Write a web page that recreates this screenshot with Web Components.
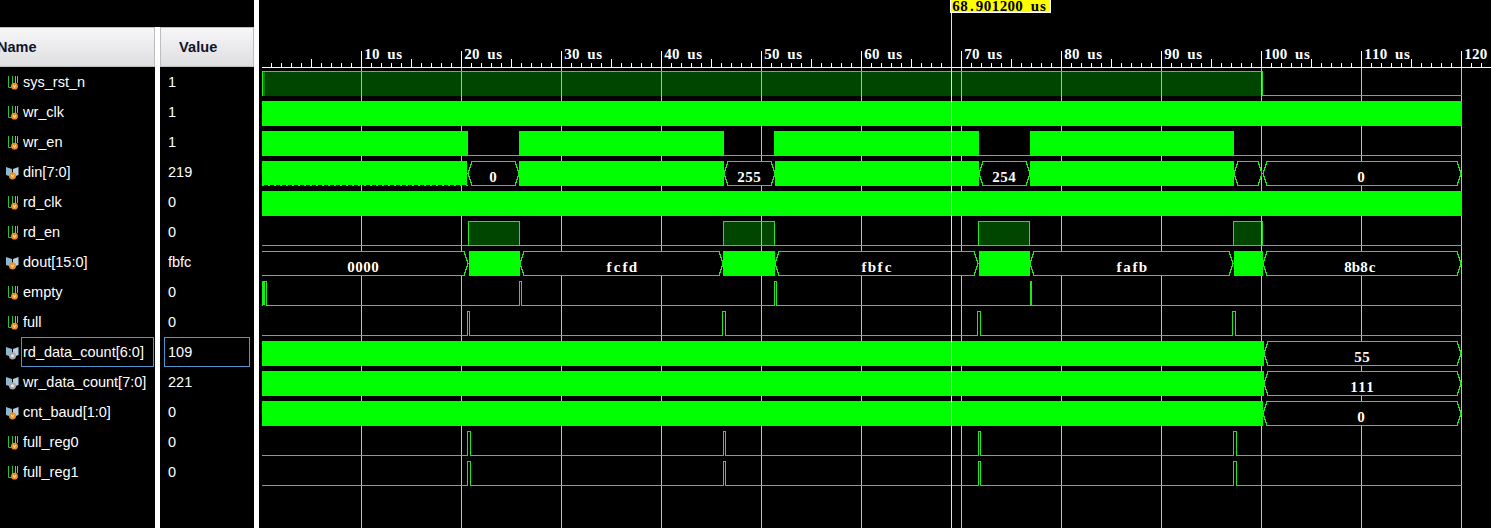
<!DOCTYPE html>
<html>
<head>
<meta charset="utf-8">
<style>
	html, body { margin: 0; height: 528px; overflow: hidden; background: #000; }
</style>
</head>
<body>
<wave-window>
	<signal-row slot="names" kind="bit"><span>sys_rst_n</span></signal-row>
	<signal-row slot="names" kind="bit"><span>wr_clk</span></signal-row>
	<signal-row slot="names" kind="bit"><span>wr_en</span></signal-row>
	<signal-row slot="names" kind="bus"><span>din[7:0]</span></signal-row>
	<signal-row slot="names" kind="bit"><span>rd_clk</span></signal-row>
	<signal-row slot="names" kind="bit"><span>rd_en</span></signal-row>
	<signal-row slot="names" kind="bus"><span>dout[15:0]</span></signal-row>
	<signal-row slot="names" kind="bit"><span>empty</span></signal-row>
	<signal-row slot="names" kind="bit"><span>full</span></signal-row>
	<signal-row slot="names" kind="bus" grey selected><span>rd_data_count[6:0]</span></signal-row>
	<signal-row slot="names" kind="bus" grey><span>wr_data_count[7:0]</span></signal-row>
	<signal-row slot="names" kind="bus"><span>cnt_baud[1:0]</span></signal-row>
	<signal-row slot="names" kind="bit"><span>full_reg0</span></signal-row>
	<signal-row slot="names" kind="bit"><span>full_reg1</span></signal-row>

	<value-row slot="values">1</value-row>
	<value-row slot="values">1</value-row>
	<value-row slot="values">1</value-row>
	<value-row slot="values">219</value-row>
	<value-row slot="values">0</value-row>
	<value-row slot="values">0</value-row>
	<value-row slot="values">fbfc</value-row>
	<value-row slot="values">0</value-row>
	<value-row slot="values">0</value-row>
	<value-row slot="values" selected>109</value-row>
	<value-row slot="values">221</value-row>
	<value-row slot="values">0</value-row>
	<value-row slot="values">0</value-row>
	<value-row slot="values">0</value-row>

	<wave-canvas slot="waves"></wave-canvas>
</wave-window>

<script>
const windowTemplate = document.createElement("template");
windowTemplate.innerHTML =
`<style>
	:host {
		display: flex;
		width: 1491px;
		height: 528px;
		background: #000;
		overflow: hidden;
		font-family: "Liberation Sans", Arial, sans-serif;
	}
	.column {
		display: flex;
		flex-direction: column;
		padding-top: 27px;
		box-sizing: border-box;
		height: 100%;
	}
	#names { width: 155px; overflow: hidden; }
	#values { width: 94px; }
	.divider { width: 5px; background: #fff; }
	.divider.first { margin-top: 27px; }
	#waves { flex: 1; min-width: 0; }
	.head {
		height: 40px;
		box-sizing: border-box;
		display: flex;
		align-items: center;
		flex: none;
		background: linear-gradient(#f7f7f8, #dedee2);
		border: 1px solid #bdbdbd;
		color: #10142a;
		font-size: 14.5px;
		font-weight: bold;
	}
	#names .head { border-left: 0; padding-left: 0; }
	#names .head span { margin-left: -3px; }
	#values .head { padding-left: 18px; }
	#values .head span { letter-spacing: .1px; }
</style>
<div class="column" id="names">
	<div class="head"><span>Name</span></div>
	<slot name="names"></slot>
</div>
<div class="divider first"></div>
<div class="column" id="values">
	<div class="head"><span>Value</span></div>
	<slot name="values"></slot>
</div>
<div class="divider"></div>
<div id="waves"><slot name="waves"></slot></div>`;

customElements.define('wave-window',
	class extends HTMLElement {
		constructor() {
			super();
			this.attachShadow({mode: 'open'})
				.appendChild(windowTemplate.content.cloneNode(true));
		}
	}
);

const bitIcon =
`<svg width="13" height="14" viewBox="0 0 13 14">
	<path d="M2.5 0V11.5H5.5M6.5 0V10" fill="none" stroke="#2cc040" stroke-width="1"/>
	<path d="M9.5 0V7M11.5 0V7" fill="none" stroke="#9aa890" stroke-width="1"/>
	<circle cx="8.5" cy="10.2" r="3.4" fill="#e8902a"/>
	<path d="M7.4 9.2L8.5 11.6L9.6 9.2" fill="none" stroke="#fff3d0" stroke-width=".9"/>
</svg>`;

const busIcon = (grey) =>
`<svg width="13" height="14" viewBox="0 0 13 14">
	<path d="M0 1L6 3V11L0 9Z" fill="#8db6d0"/>
	<path d="M7 3L12.5 1V9L7 11Z" fill="#b6d0e2"/>
	<circle cx="6.5" cy="9.8" r="3.6" fill="${grey ? '#a8a8a8' : '#e8902a'}"/>
	${grey ? '<circle cx="6.5" cy="9.8" r="1.5" fill="#e8e8e8"/>'
		: '<path d="M5.4 8.8L6.5 11.2L7.6 8.8" fill="none" stroke="#fff3d0" stroke-width=".9"/>'}
</svg>`;

customElements.define('signal-row',
	class extends HTMLElement {
		constructor() {
			super();
			const grey = this.hasAttribute("grey");
			const icon = this.getAttribute("kind") == "bus" ? busIcon(grey) : bitIcon;
			this.attachShadow({mode: 'open'}).innerHTML =
			`<style>
				:host {
					display: flex;
					align-items: center;
					height: 30px;
					padding-left: 6px;
					box-sizing: border-box;
					color: #fff;
					font-size: 14.5px;
					white-space: nowrap;
				}
				.icon { width: 13px; height: 14px; flex: none; margin-top: 1px; }
				.label {
					flex: 1;
					height: 30px;
					line-height: 28px;
					margin: 0 1px 0 2px;
					padding-left: 1px;
					box-sizing: border-box;
					border: 1px solid transparent;
				}
				:host([selected]) .label { border-color: #4f94cd; }
			</style>
			<div class="icon">${icon}</div>
			<div class="label"><slot></slot></div>`;
		}
	}
);

const valueTemplate = document.createElement("template");
valueTemplate.innerHTML =
`<style>
	:host {
		display: block;
		height: 30px;
		padding: 0 4px;
		box-sizing: border-box;
		color: #fff;
		font-size: 14.5px;
	}
	div {
		height: 30px;
		line-height: 28px;
		padding-left: 3px;
		box-sizing: border-box;
		border: 1px solid transparent;
	}
	:host([selected]) div { border-color: #4f94cd; }
</style>
<div><slot></slot></div>`;

customElements.define('value-row',
	class extends HTMLElement {
		constructor() {
			super();
			this.attachShadow({mode: 'open'})
				.appendChild(valueTemplate.content.cloneNode(true));
		}
	}
);

const LINE = "#1fe81f";
const FILL = "#00ff00";
const HIGH = "rgba(0,255,0,0.27)";
const GRID = "#c0c0c0";
const END = 1462;

// row tops are 67 + 30 * index, the trace band is +4 to +29
const rowTop = (row) => 67 + 30 * row;

customElements.define('wave-canvas',
	class extends HTMLElement {
		constructor() {
			super();
			this.parts = [];
			this.draw();
			this.attachShadow({mode: 'open'}).innerHTML =
			`<style>
				:host { display: block; width: 1232px; height: 528px; overflow: hidden; }
				svg { display: block; }
				text { font-family: "Liberation Serif", serif; font-weight: bold; font-size: 15px; fill: #fff; }
				text.cursor { fill: #000; }
			</style>
			<svg width="1232" height="528" viewBox="259 0 1232 528" shape-rendering="crispEdges">${this.parts.join("")}</svg>`;
		}

		rect(x, y, w, h, color) {
			this.parts.push(`<rect x="${x}" y="${y}" width="${w}" height="${h}" fill="${color}"/>`);
		}

		// one glyph per step, so the letters sit on the fixed grid of the bitmap font
		mono(str, x, y, step, cls) {
			const xs = [...str].map((c, i) => (x + step * (i + 0.5)).toFixed(1)).join(" ");
			this.parts.push(`<text x="${xs}" y="${y}" text-anchor="middle" class="${cls || ""}">${str}</text>`);
		}

		low(row, from, to) {
			this.rect(from, rowTop(row) + 28, to - from, 1, LINE);
		}

		pulse(row, from, to) {
			const t = rowTop(row);
			this.rect(from, t + 4, to - from, 1, LINE);
			this.rect(from, t + 4, 1, 25, LINE);
			this.rect(to - 1, t + 4, 1, 25, LINE);
			this.rect(from + 1, t + 28, to - from - 2, 1, "#000");
		}

		high(row, from, to) {
			const t = rowTop(row);
			this.rect(from, t + 4, to - from, 25, HIGH);
			this.rect(from, t + 4, to - from, 1, LINE);
			this.rect(from, t + 4, 1, 25, LINE);
			this.rect(to - 1, t + 4, 1, 25, LINE);
		}

		fill(row, from, to) {
			this.rect(from, rowTop(row) + 4, to - from, 25, FILL);
		}

		// bus values are opaque: the grid does not show through them
		bus(row, from, to, label, center, openLeft) {
			const t = rowTop(row) + 4.5, b = t + 24, m = t + 12;
			if(openLeft) {
				this.rect(from, t, to - from - 2, 24, "#000");
				this.parts.push(`<polygon points="${from},${t} ${to - 4},${t} ${to},${m} ${to - 4},${b} ${from},${b}" fill="#000" stroke="none"/>`);
				this.parts.push(`<polyline points="${from},${t} ${to - 4},${t} ${to},${m} ${to - 4},${b} ${from},${b}" fill="none" stroke="${LINE}"/>`);
			} else {
				this.parts.push(`<polygon points="${from + 4},${b} ${from},${m} ${from + 4},${t} ${to - 4},${t} ${to},${m} ${to - 4},${b}" fill="#000" stroke="${LINE}"/>`);
			}
			if(label) {
				this.mono(label, center - label.length * 4, rowTop(row) + 25, 8);
			}
		}

		draw() {
			// grid first, everything else goes over it
			for(let t = 10; t <= 120; t += 10) {
				this.rect(261 + t * 10, 68, 1, 460, GRID);
			}

			// sys_rst_n
			this.high(0, 262, 1263);
			this.rect(263, 72, 1, 24, "#0a7a0a");
			this.rect(264, 72, 1, 24, "#0a7a0a");
			this.low(0, 1262, END);

			// wr_clk, rd_clk
			this.fill(1, 262, END);
			this.fill(4, 262, END);

			// wr_en
			this.low(2, 468, END);
			[[262, 468], [519, 724], [774, 979], [1030, 1234]].forEach(s => this.fill(2, s[0], s[1]));

			// din, the first burst has a dotted lower edge
			this.rect(262, 161, 205, 24, FILL);
			for(let x = 262; x < 467; x += 6) {
				this.rect(x, 185, 2, 1, FILL);
			}
			[[519, 724], [775, 979], [1030, 1234]].forEach(s => this.fill(3, s[0], s[1]));
			this.bus(3, 468, 519, "0", 493);
			this.bus(3, 724, 775, "255", 749);
			this.bus(3, 979, 1030, "254", 1004);
			this.bus(3, 1234, 1262, "", 0);
			this.bus(3, 1263, 1461, "0", 1361);

			// rd_en
			this.low(5, 262, END);
			[[468, 520], [723, 775], [978, 1030], [1233, 1263]].forEach(s => this.high(5, s[0], s[1]));

			// dout
			this.bus(6, 262, 468, "0000", 363, true);
			this.bus(6, 520, 723, "fcfd", 621);
			this.bus(6, 775, 978, "fbfc", 876);
			this.bus(6, 1030, 1233, "fafb", 1131);
			this.bus(6, 1263, 1461, "8b8c", 1360);
			[[469, 520], [723, 775], [979, 1030], [1234, 1263]].forEach(s => this.fill(6, s[0], s[1]));

			// empty
			this.low(7, 266, END);
			this.rect(262, 281, 3, 25, FILL);
			[[262, 267], [519, 522], [774, 777], [1030, 1032]].forEach(s => this.pulse(7, s[0], s[1]));

			// full
			this.low(8, 262, END);
			[[467, 470], [722, 726], [977, 981], [1232, 1236]].forEach(s => this.pulse(8, s[0], s[1]));

			// counters
			this.fill(9, 262, 1264);
			this.bus(9, 1264, 1461, "55", 1362);
			this.fill(10, 262, 1264);
			this.bus(10, 1264, 1461, "111", 1362);
			this.fill(11, 262, 1263);
			this.bus(11, 1263, 1461, "0", 1361);

			// full_reg0, full_reg1
			[12, 13].forEach(row => {
				this.low(row, 262, END);
				[[467, 471], [723, 726], [978, 981], [1233, 1237]].forEach(s => this.pulse(row, s[0], s[1]));
			});

			// ruler
			this.rect(262, 67, 1229, 1, "#fff");
			for(let x = 271; x < 1491; x += 10) {
				const major = (x - 261) % 100 == 0;
				const mid = (x - 261) % 50 == 0;
				const h = major ? 16 : (mid ? 8 : 4);
				this.rect(x, 67 - h, 1, h, "#fff");
			}
			for(let t = 10; t <= 110; t += 10) {
				this.mono(t + " us", 264 + t * 10, 59, 7.8);
			}
			// the last label runs off the window, only its number is visible
			this.mono("120", 1464, 59, 7.8);

			// cursor on top of everything
			this.rect(951, 13, 1, 515, "#ffff00");
			this.rect(950, 0, 101, 13, "#fff");
			this.rect(951, 0, 99, 12, "#ffff00");
			this.mono("68.901200 us", 952, 11, 7.9, "cursor");
		}
	}
);
</script>
</body>
</html>
